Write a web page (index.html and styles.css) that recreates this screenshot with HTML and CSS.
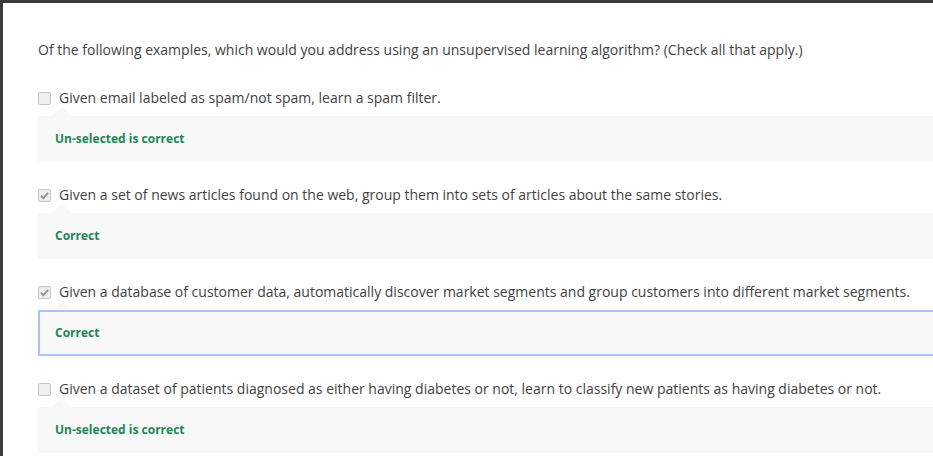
FILE: index.html
```html
<!DOCTYPE html>
<html>
<head>
<meta charset="utf-8">
<link rel="stylesheet" href="styles.css">
</head>
<body>
<div class="frame">
  <div class="quiz">
    <p class="question">Of the following examples, which would you address using an unsupervised learning algorithm? (Check all that apply.)</p>

    <div class="option">
      <label class="choice"><span class="box"></span><span>Given email labeled as spam/not spam, learn a spam filter.</span></label>
      <div class="feedback"><span class="notch"></span>Un-selected is correct</div>
    </div>

    <div class="option">
      <label class="choice"><span class="box checked"><svg viewBox="0 0 13 13" width="13" height="13"><path d="M3 6.8 L5.4 9.2 L10 3.8" fill="none" stroke="#959595" stroke-width="2"/></svg></span><span>Given a set of news articles found on the web, group them into sets of articles about the same stories.</span></label>
      <div class="feedback"><span class="notch"></span>Correct</div>
    </div>

    <div class="option">
      <label class="choice"><span class="box checked"><svg viewBox="0 0 13 13" width="13" height="13"><path d="M3 6.8 L5.4 9.2 L10 3.8" fill="none" stroke="#959595" stroke-width="2"/></svg></span><span>Given a database of customer data, automatically discover market segments and group customers into different market segments.</span></label>
      <div class="feedback focused"><span class="notch"></span>Correct</div>
    </div>

    <div class="option">
      <label class="choice"><span class="box"></span><span>Given a dataset of patients diagnosed as either having diabetes or not, learn to classify new patients as having diabetes or not.</span></label>
      <div class="feedback"><span class="notch"></span>Un-selected is correct</div>
    </div>
  </div>
</div>
</body>
</html>
```

FILE: styles.css
```css
html, body {
  margin: 0;
  padding: 0;
  overflow: hidden;
  background: #ffffff;
}

.frame {
  height: 456px;
  border-top: 3px solid #3b3b3b;
  border-left: 3px solid #3b3b3b;
  box-sizing: border-box;
  background: #ffffff;
  overflow: hidden;
}

.quiz {
  padding: 37px 0 0 35px;
  margin-right: -4px;
  font-family: "Open Sans", "Liberation Sans", sans-serif;
  font-size: 14px;
  line-height: 20px;
  color: #424242;
}

.question {
  margin: 0 0 28px 0;
  white-space: nowrap;
}

.option {
  margin-bottom: 23px;
}

.choice {
  display: flex;
  align-items: center;
  gap: 8px;
  height: 20px;
  white-space: nowrap;
}

.box {
  width: 11px;
  height: 11px;
  border: 1px solid #c6c6c6;
  border-radius: 2px;
  background: #efefef;
  position: relative;
  flex: none;
}

.box svg {
  position: absolute;
  left: -1px;
  top: -1px;
}

.feedback {
  position: relative;
  margin-top: 8px;
  height: 42px;
  border: 2px solid #f8f8f8;
  background: #f8f8f8;
  padding: 0 0 0 15px;
  display: flex;
  align-items: center;
  font-size: 12px;
  font-weight: 700;
  color: #238556;
}

.feedback.focused {
  border-color: #a5c4f7;
}

.notch {
  position: absolute;
  left: 12px;
  top: -11px;
  width: 0;
  height: 0;
  border-left: 10px solid transparent;
  border-right: 10px solid transparent;
  border-bottom: 9px solid #f8f8f8;
}
```
